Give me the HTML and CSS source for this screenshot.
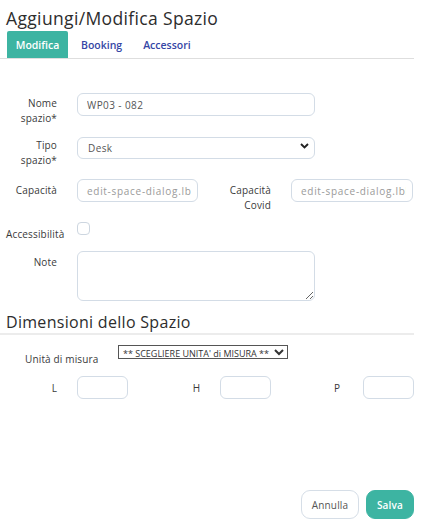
FILE: index.html
```html
<!DOCTYPE html>
<html lang="it">
<head>
<meta charset="utf-8">
<title>Aggiungi/Modifica Spazio</title>
<link rel="stylesheet" href="styles.css">
</head>
<body>
<div class="dialog">
  <h1 class="title">Aggiungi/Modifica Spazio</h1>
  <nav class="tabs">
    <a class="tab active">Modifica</a>
    <a class="tab">Booking</a>
    <a class="tab">Accessori</a>
  </nav>

  <form class="form">
    <div class="row r1">
      <label class="lbl">Nome<br>spazio*</label>
      <input class="field wide" type="text" value="WP03 - 082">
    </div>
    <div class="row r2">
      <label class="lbl">Tipo<br>spazio*</label>
      <div class="select-wrap wide">
        <select class="field sel"><option>Desk</option></select>
        <svg class="chev" width="9" height="6" viewBox="0 0 9 6"><path d="M1 1l3.5 3.5L8 1" fill="none" stroke="#222" stroke-width="1.9"/></svg>
      </div>
    </div>
    <div class="row r3">
      <div class="half">
        <label class="lbl">Capacità</label>
        <input class="field small" type="text" placeholder="edit-space-dialog.lbl">
      </div>
      <div class="half">
        <label class="lbl">Capacità<br>Covid</label>
        <input class="field small" type="text" placeholder="edit-space-dialog.lbl">
      </div>
    </div>
    <div class="row r4">
      <label class="lbl-check">Accessibilità</label>
      <span class="check"></span>
    </div>
    <div class="row r5">
      <label class="lbl">Note</label>
      <textarea class="field wide area"></textarea>
    </div>
  </form>

  <h2 class="section">Dimensioni dello Spazio</h2>
  <div class="unit-row">
    <label class="unit-lbl">Unità di misura</label>
    <select class="unit-sel"><option>** SCEGLIERE UNITA' di MISURA **</option></select>
  </div>
  <div class="dims">
    <div class="dim"><label class="dim-lbl">L</label><input class="field dim-in" type="text"></div>
    <div class="dim"><label class="dim-lbl">H</label><input class="field dim-in" type="text"></div>
    <div class="dim"><label class="dim-lbl">P</label><input class="field dim-in" type="text"></div>
  </div>

  <div class="actions">
    <button class="btn cancel" type="button">Annulla</button>
    <button class="btn save" type="button">Salva</button>
  </div>
</div>
</body>
</html>
```

FILE: styles.css
```css
* { box-sizing: border-box; }
html, body { margin: 0; padding: 0; background: #fff; }
body {
  font-family: "Open Sans", "Noto Sans", sans-serif;
  color: #333;
  width: 422px;
  height: 523px;
  overflow: hidden;
}
.dialog {
  width: 414px;
  height: 523px;
  display: flex;
  flex-direction: column;
}
.title {
  margin: 0;
  padding: 6px 0 0 6px;
  font-size: 17.5px;
  font-weight: 400;
  line-height: 24px;
  color: #2d2d2d;
  letter-spacing: 0.35px;
}
.tabs {
  display: flex;
  margin-top: 1px;
  border-bottom: 1px solid #dedede;
  padding-left: 7px;
  height: 28px;
}
.tab {
  display: flex;
  align-items: center;
  justify-content: center;
  font-size: 10.5px;
  font-weight: 600;
  color: #3546a5;
  padding: 0 10px;
  height: 27px;
}
.tab.active {
  background: #3db4a2;
  color: #fff;
  border-radius: 2px 2px 0 0;
  width: 61px;
  padding: 0;
}
.tabs .tab:nth-child(2) { padding: 0 11px 0 13px; }
.form { padding-top: 34px; }
.row { display: flex; align-items: flex-start; }
.lbl {
  width: 57px;
  text-align: right;
  font-size: 10px;
  line-height: 15px;
  color: #3a3a3a;
  padding-top: 3px;
  flex: none;
  letter-spacing: 0.15px;
}
.field {
  font-family: inherit;
  font-size: 10px;
  letter-spacing: 0.4px;
  color: #555;
  border: 1px solid #d3dce6;
  border-radius: 6px;
  background: #fff;
  height: 23px;
  padding: 0 9px;
  outline: none;
}
.field::placeholder { color: #9a9a9a; letter-spacing: 0.7px; }
.wide { width: 238px; margin-left: 20px; flex: none; }
.r1 { height: 42px; }
.r2 { height: 44px; }
.r3 { height: 43px; }
.r4 { height: 29px; }
.select-wrap { position: relative; height: 22px; }
.sel {
  width: 100%;
  height: 22px;
  appearance: none;
  -webkit-appearance: none;
  padding: 0 10px;
}
.chev { position: absolute; right: 6px; top: 8px; }
.half { display: flex; align-items: flex-start; width: 214px; flex: none; }
.half .lbl { padding-top: 4px; }
.small { width: 122px; margin-left: 20px; height: 23px; flex: none; padding-right: 6px; }
.half:first-child .small { width: 121px; }
.lbl-check {
  font-size: 10px;
  color: #3a3a3a;
  margin-left: 6px;
  line-height: 15px;
  padding-top: 5px;
  letter-spacing: 0.15px;
}
.check {
  width: 13px;
  height: 13px;
  border: 1px solid #cdd6e0;
  border-radius: 4px;
  margin-left: 13px;
  flex: none;
}
.area { height: 50px; resize: both; padding: 6px 9px; }
.r5 .lbl { padding-top: 4px; }
.section {
  margin: 11px 0 0 0;
  padding-left: 6px;
  font-size: 16px;
  font-weight: 400;
  line-height: 20px;
  color: #2d2d2d;
  border-bottom: 2px solid #ececec;
  padding-bottom: 1px;
  letter-spacing: 0.3px;
}
.unit-row {
  display: flex;
  align-items: center;
  margin-top: 13px;
  height: 14px;
}
.unit-lbl {
  font-size: 10px;
  color: #3a3a3a;
  margin-left: 25px;
  width: 93px;
  padding-top: 8px;
  letter-spacing: 0.15px;
}
.unit-sel {
  font-family: inherit;
  font-size: 9px;
  height: 14px;
  width: 170px;
  border: 1px solid #555;
  border-radius: 0;
  color: #333;
  background: #fff;
  padding: 0;
  margin-top: -6px;
}
.dims { display: flex; margin-top: 14px; }
.dim { display: flex; align-items: center; width: 143px; flex: none; }
.dim-lbl {
  width: 57px;
  text-align: right;
  font-size: 10px;
  color: #3a3a3a;
}
.dim:nth-child(3) .dim-lbl { padding-right: 3px; }
.dim-in { width: 51px; margin-left: 20px; height: 23px; }
.actions {
  margin-top: auto;
  display: flex;
  justify-content: flex-end;
  gap: 7px;
  padding-bottom: 4px;
}
.btn {
  font-family: inherit;
  font-size: 10px;
  height: 29px;
  border-radius: 9px;
  cursor: pointer;
  letter-spacing: 0.2px;
}
.cancel {
  width: 58px;
  background: #fff;
  border: 1px solid #d6dee7;
  color: #555;
}
.save {
  width: 48px;
  background: #3db4a2;
  border: 1px solid #3db4a2;
  color: #fff;
  font-weight: 600;
}
```
